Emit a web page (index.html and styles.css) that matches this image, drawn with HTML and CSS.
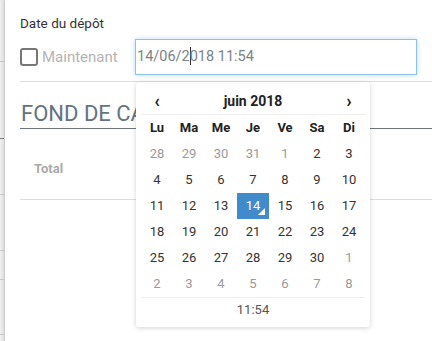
FILE: index.html
```html
<!DOCTYPE html>
<html lang="fr">
<head>
<meta charset="utf-8">
<title>Date du dépôt</title>
<link rel="stylesheet" href="styles.css">
</head>
<body>
<div class="page">
  <div class="gutter">
    <div class="seg s1"></div>
    <div class="seg s2 dark"></div>
    <div class="seg s3"></div>
    <div class="seg s4"></div>
    <div class="seg s5"></div>
    <div class="seg s6"></div>
  </div>
  <div class="panel">
    <div class="field">
      <div class="label">Date du dépôt</div>
      <div class="row">
        <label class="check"><span class="box"></span><span class="check-text">Maintenant</span></label>
        <div class="input-wrap">
          <div class="input">14/06/2<span class="caret"></span>018 11:54</div>
          <div class="picker">
            <div class="head">
              <span class="nav">‹</span>
              <span class="month">juin 2018</span>
              <span class="nav">›</span>
            </div>
            <div class="grid dow">
              <span>Lu</span><span>Ma</span><span>Me</span><span>Je</span><span>Ve</span><span>Sa</span><span>Di</span>
            </div>
            <div class="grid days">
              <span class="old">28</span><span class="old">29</span><span class="old">30</span><span class="old">31</span><span class="old">1</span><span>2</span><span>3</span>
              <span>4</span><span>5</span><span>6</span><span>7</span><span>8</span><span>9</span><span>10</span>
              <span>11</span><span>12</span><span>13</span><span class="active">14</span><span>15</span><span>16</span><span>17</span>
              <span>18</span><span>19</span><span>20</span><span>21</span><span>22</span><span>23</span><span>24</span>
              <span>25</span><span>26</span><span>27</span><span>28</span><span>29</span><span>30</span><span class="old">1</span>
              <span class="old">2</span><span class="old">3</span><span class="old">4</span><span class="old">5</span><span class="old">6</span><span class="old">7</span><span class="old">8</span>
            </div>
            <div class="foot">11:54</div>
          </div>
        </div>
      </div>
    </div>
    <div class="sep"></div>
    <h2 class="title"><span class="title-text">FOND DE CAISSE</span></h2>
    <div class="total-row"><span class="total">Total</span></div>
  </div>
</div>
</body>
</html>
```

FILE: styles.css
```css
* { box-sizing: border-box; }
html, body { margin: 0; padding: 0; }
body {
  width: 432px;
  height: 341px;
  overflow: hidden;
  background: #fff;
  font-family: Roboto, "Liberation Sans", sans-serif;
  color: #333;
}
.page {
  display: flex;
  height: 341px;
}
.gutter {
  width: 5px;
  flex: none;
  display: flex;
  flex-direction: column;
  background: linear-gradient(to right, #efefef, #e4e4e4);
  border-right: 1px solid #dadada;
}
.seg { border-bottom: 1px solid #c8c8c8; }
.seg.dark { border-bottom-color: #7a7a7a; }
.s1 { height: 62px; }
.s2 { height: 77px; }
.s3 { height: 56px; }
.s4 { height: 56px; }
.s5 { height: 29px; }
.s6 { height: 55px; }
.panel {
  flex: 1;
  padding: 13px 0 0 15px;
  box-shadow: -1px 0 3px rgba(0,0,0,0.08);
}
.label {
  font-size: 13.5px;
  line-height: 20px;
  color: #333;
}
.row {
  margin-top: 6px;
  margin-right: 15px;
  display: grid;
  grid-template-columns: 115px 1fr;
  height: 36px;
}
.check {
  display: flex;
  align-items: center;
  gap: 4px;
}
.box {
  width: 18px;
  height: 18px;
  border: 2px solid #777;
  border-radius: 3px;
}
.check-text {
  font-size: 15px;
  color: #b3b3b3;
}
.input-wrap { position: relative; }
.input {
  height: 36px;
  border: 1px solid #8cc1ec;
  box-shadow: 0 0 5px rgba(102,175,233,0.45);
  padding-left: 1px;
  font-size: 14.5px;
  line-height: 34px;
  color: #7a828a;
  white-space: nowrap;
}
.caret {
  display: inline-block;
  width: 1px;
  height: 18px;
  background: #333;
  vertical-align: -4px;
  margin-right: -1px;
}
.picker {
  position: absolute;
  left: 1px;
  top: 43px;
  width: 234px;
  padding: 5px;
  background: #fff;
  border-radius: 3px;
  box-shadow: 0 1px 5px rgba(0,0,0,0.18);
  z-index: 5;
}
.head {
  display: grid;
  grid-template-columns: 32px 1fr 32px;
  height: 28px;
  align-items: center;
  text-align: center;
  border-bottom: 1px solid #eee;
}
.nav {
  font-size: 18px;
  font-weight: 700;
  color: #222;
  line-height: 18px;
}
.month {
  font-size: 14px;
  font-weight: 700;
  color: #222;
  line-height: 18px;
}
.grid {
  display: grid;
  grid-template-columns: repeat(7, 32px);
  grid-auto-rows: 26px;
  text-align: center;
  font-size: 13px;
}
.grid span { line-height: 26px; }
.dow span { font-weight: 700; color: #222; }
.days span { color: #333; position: relative; }
.days .old { color: #9a9a9a; }
.days .active {
  background: #428bca;
  color: #fff;
}
.days .active::before {
  content: "";
  position: absolute;
  right: 4px;
  bottom: 4px;
  border-style: solid;
  border-color: transparent;
  border-width: 0 0 7px 7px;
  border-bottom-color: #fff;
}
.foot {
  border-top: 1px solid #eee;
  height: 25px;
  line-height: 24px;
  text-align: center;
  font-size: 13px;
  color: #555;
}
.sep {
  margin-top: 6px;
  border-top: 1px solid #ddd;
}
.title {
  margin: 18px 0 0 0;
  font-size: 22px;
  font-weight: 400;
  line-height: 28px;
  height: 29px;
  color: #637382;
  border-bottom: 1px solid #6d7378;
  white-space: nowrap;
}
.title-text {
  display: inline-block;
  vertical-align: top;
  max-width: 116px;
  overflow: hidden;
  padding-left: 1px;
}
.total-row {
  padding: 29px 0 20px 14px;
  line-height: 20px;
  border-bottom: 1px solid #ddd;
}
.total {
  font-size: 13px;
  font-weight: 700;
  color: #aaa;
}
```
